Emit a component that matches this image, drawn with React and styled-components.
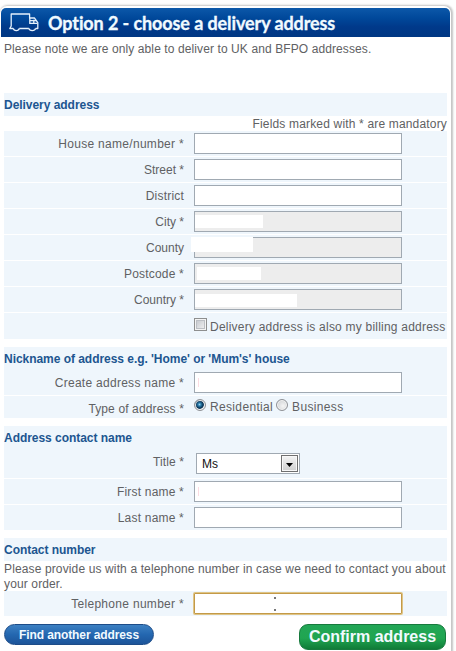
import styled, { createGlobalStyle, css } from 'styled-components';

const GlobalStyle = createGlobalStyle`
  * {
    box-sizing: border-box;
  }
  body {
    margin: 0;
    overflow: hidden;
    background: #fefefe;
    color: #606163;
    font: 12px/15px "Liberation Sans", Arial, sans-serif;
    letter-spacing: 0.17px;
  }
`;

const addressFields = [
  { id: 'house', label: 'House name/number *', spacing: 0.3 },
  { id: 'street', label: 'Street *', spacing: 0 },
  { id: 'district', label: 'District' },
  { id: 'city', label: 'City *', spacing: 0, mask: { x: 1, y: 4, width: 68, height: 13 } },
  { id: 'county', label: 'County', spacing: 0, mask: { x: -3, y: 0, width: 62, height: 15 } },
  { id: 'postcode', label: 'Postcode *', mask: { x: 3, y: 4, width: 64, height: 13 } },
  { id: 'country', label: 'Country *', spacing: 0, mask: { x: 1, y: 5, width: 102, height: 13 } },
];

function TruckIcon() {
  return (
    <svg width="30" height="20" viewBox="0 0 30 20" fill="none" stroke="#e4f0fc" strokeWidth="1.3" strokeLinejoin="round">
      <path d="M4.3 15.5H.8L2.2 13V1h18.4v4h4.8l3.4 4.6v5.9h-2.2M10.3 15.5h9.6" />
      <path d="M4.3 15.3c.6 3 5.4 3 6 0M19.9 15.3c.7 3 6 3 6.7 0" />
      <path d="M20.8 5v5.4h7.6M24.8 6.8v3.6M20.8 7.6h6.4" />
    </svg>
  );
}

function Field({ id, label, mask, caret, spacing }) {
  return (
    <Row>
      <Label htmlFor={id} $spacing={spacing}>{label}</Label>
      <Control>
        <TextInput id={id} type="text" disabled={Boolean(mask)} />
        {mask && <Mask $area={mask} />}
        {caret && <Caret />}
      </Control>
    </Row>
  );
}

function App() {
  return (
    <Panel>
      <GlobalStyle />
      <Header>
        <TruckIcon />
        <Heading>Option 2 - choose a delivery address</Heading>
      </Header>
      <Form>
        <Intro>Please note we are only able to deliver to UK and BFPO addresses.</Intro>

        <Section>
          <SectionTitle>Delivery address</SectionTitle>
          <Mandatory>Fields marked with * are mandatory</Mandatory>
          <Rows>
            {addressFields.map((field) => <Field key={field.id} {...field} />)}
            <Row $height={26}>
              <Label />
              <Checkbox id="billing" type="checkbox" />
              <OptionLabel htmlFor="billing">Delivery address is also my billing address</OptionLabel>
            </Row>
          </Rows>
        </Section>

        <Section>
          <SectionTitle>Nickname of address e.g. 'Home' or 'Mum's' house</SectionTitle>
          <Rows>
            <Field id="nickname" label="Create address name *" spacing={0.28} caret />
            <Row $height={22}>
              <Label as="span" $spacing={0.13}>Type of address *</Label>
              <Radio id="residential" type="radio" name="type" defaultChecked />
              <OptionLabel htmlFor="residential" $radio>Residential</OptionLabel>
              <Radio id="business" type="radio" name="type" $second />
              <OptionLabel htmlFor="business" $radio>Business</OptionLabel>
            </Row>
          </Rows>
        </Section>

        <Section>
          <SectionTitle>Address contact name</SectionTitle>
          <Rows>
            <Row $height={29}>
              <Label $spacing={0.1}>Title *</Label>
              <Select type="button">
                Ms
                <SelectArrow>
                  <svg width="7" height="4" viewBox="0 0 7 4"><path d="M0 0h7L3.5 4z" fill="#000" /></svg>
                </SelectArrow>
              </Select>
            </Row>
            <Field id="firstName" label="First name *" caret />
            <Field id="lastName" label="Last name *" />
          </Rows>
        </Section>

        <Section>
          <SectionTitle>Contact number</SectionTitle>
          <Note>Please provide us with a telephone number in case we need to contact you about your order.</Note>
          <Row>
            <Label htmlFor="phone" $spacing={0.3}>Telephone number *</Label>
            <Control>
              <TextInput id="phone" type="text" $focused />
              <Speck $top={4} />
              <Speck $top={16} />
            </Control>
          </Row>
        </Section>

        <Actions>
          <FindButton type="button">Find another address</FindButton>
          <ConfirmButton type="button">Confirm address</ConfirmButton>
        </Actions>
      </Form>
    </Panel>
  );
}

const Panel = styled.main`
  width: 451px;
  height: 645px;
  margin-top: 6px;
  padding: 2px 1px 0;
  background: #fff;
  border-radius: 7px 7px 0 0;
  box-shadow: 1px 0 2px 1px #c4c4c4;
`;

const Header = styled.header`
  display: flex;
  align-items: center;
  height: 29px;
  padding-left: 8px;
  gap: 9px;
  color: #f0faff;
  background: linear-gradient(#0c58a9, #00489a 35%, #00398a 65%, #003783);
  border-radius: 5px 5px 0 0;
`;

const Heading = styled.h1`
  margin: 0;
  font: 700 18px/28px Lato, sans-serif;
  letter-spacing: -0.1px;
  -webkit-text-stroke: 0.3px #f0faff;
  white-space: nowrap;
`;

const Form = styled.form`
  width: 443px;
  margin-left: 3px;
`;

const Intro = styled.p`
  height: 56px;
  margin: 0;
  padding-top: 5px;
  letter-spacing: 0.1px;
`;

const Section = styled.section`
  margin-bottom: 8px;
`;

const SectionTitle = styled.h2`
  height: 23px;
  margin: 0;
  padding-top: 1px;
  background: #eff6fc;
  color: #205590;
  font-size: 12px;
  line-height: 23px;
  letter-spacing: -0.04px;
`;

const Mandatory = styled.p`
  height: 15px;
  margin: 0;
  padding-top: 1px;
  text-align: right;
`;

const Rows = styled.div`
  display: flex;
  flex-direction: column;
  gap: 1px;
`;

const Row = styled.div`
  display: flex;
  align-items: flex-start;
  height: ${({ $height = 25 }) => $height}px;
  padding-top: 2px;
  background: #eff6fc;
`;

const Label = styled.label`
  width: 180px;
  margin-right: 10px;
  padding-top: 4px;
  letter-spacing: ${({ $spacing = 0.2 }) => $spacing}px;
  text-align: right;
`;

const Control = styled.div`
  position: relative;
  width: 208px;
  height: 21px;
`;

const TextInput = styled.input`
  display: block;
  width: 208px;
  height: 21px;
  border: 1px solid #a0a9b2;
  background: #fff;
  outline: none;

  &:disabled {
    background: #ededed;
  }

  ${({ $focused }) => $focused && css`
    border-color: #c39a48;
    box-shadow: 0 0 0 1px #dfc486;
    border-radius: 1px;
  `}
`;

const Mask = styled.span`
  position: absolute;
  left: ${({ $area }) => $area.x}px;
  top: ${({ $area }) => $area.y}px;
  width: ${({ $area }) => $area.width}px;
  height: ${({ $area }) => $area.height}px;
  background: #fff;
`;

const Caret = styled.span`
  position: absolute;
  left: 4px;
  top: 6px;
  width: 1px;
  height: 9px;
  background: #fbdde3;
`;

const Speck = styled.span`
  position: absolute;
  left: 80px;
  top: ${({ $top }) => $top}px;
  width: 2px;
  height: 2px;
  background: #777;
`;

const Checkbox = styled.input`
  appearance: none;
  width: 13px;
  height: 13px;
  margin: 3px 3px 0 0;
  border: 1px solid #8e8f8f;
  background: linear-gradient(135deg, #bfc2c8, #f6f6f6);
  box-shadow: inset 0 0 0 1px #f4f4f4, inset 0 0 0 2px #bcbfc4;
`;

const OptionLabel = styled.label`
  padding-top: ${({ $radio }) => ($radio ? 2 : 5)}px;
  letter-spacing: ${({ $radio }) => ($radio ? 0.34 : 0.22)}px;
  white-space: nowrap;
`;

const Radio = styled.input`
  appearance: none;
  width: 12px;
  height: 12px;
  margin: 1px 4px 0 ${({ $second }) => ($second ? 3 : 0)}px;
  border: 1px solid #8e9095;
  border-radius: 50%;
  background: radial-gradient(circle at 60% 60%, #f5f5f5, #c5c8cc);
  box-shadow: inset 0 0 0 1px #f4f4f4;

  &:checked {
    background: radial-gradient(circle at 45% 45%, #9ed8f3 0, #2a7cab 20%, #0b3657 45%, #10395a 52%, #e6e9ec 62%);
  }
`;

const Select = styled.button`
  display: flex;
  align-items: center;
  justify-content: space-between;
  width: 104px;
  height: 21px;
  margin: 2px 0 0 2px;
  padding: 0 1px 0 5px;
  border: 1px solid #a0a9b2;
  background: #fff;
  color: #111;
  font: 12px "Liberation Sans", Arial, sans-serif;
`;

const SelectArrow = styled.span`
  display: flex;
  align-items: center;
  justify-content: center;
  width: 17px;
  height: 17px;
  padding-top: 3px;
  border: 1px solid #707070;
  background: linear-gradient(#f4f4f4, #cfcfcf);
  box-shadow: inset 0 0 0 1px #f8f8f8;
`;

const Note = styled.p`
  height: 30px;
  margin: 0 -4px 0 0;
  padding-top: 1px;
  letter-spacing: 0.13px;
`;

const Actions = styled.div`
  display: flex;
  justify-content: space-between;
  align-items: flex-start;
  width: 442px;
`;

const Button = styled.button`
  padding: 0;
  color: #f2faff;
  font-family: "Liberation Sans", Arial, sans-serif;
  font-weight: bold;
  white-space: nowrap;
`;

const FindButton = styled(Button)`
  width: 150px;
  height: 21px;
  border: 1px solid #1d4c88;
  border-radius: 11px;
  background: linear-gradient(#3c80c2, #2467b0 50%, #1c5499);
  font-size: 12px;
  letter-spacing: -0.1px;
`;

const ConfirmButton = styled(Button)`
  width: 147px;
  height: 26px;
  border: 1px solid #177a3d;
  border-radius: 9px;
  background: linear-gradient(#22a656, #20a551 55%, #107c38);
  font-size: 16px;
`;

export default App;
